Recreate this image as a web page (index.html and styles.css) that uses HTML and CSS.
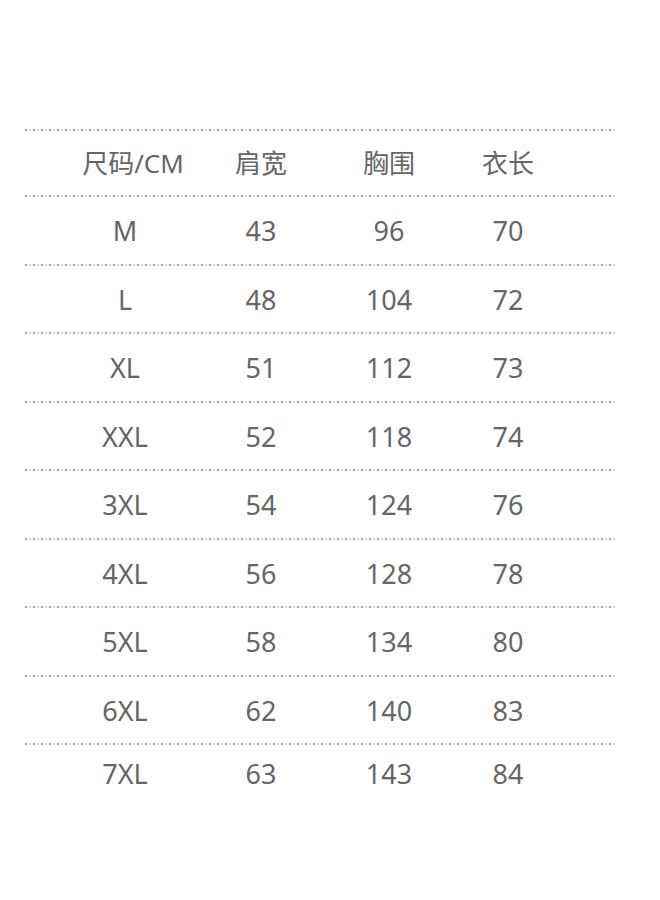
FILE: index.html
```html
<!DOCTYPE html>
<html lang="zh-CN">
<head>
<meta charset="utf-8">
<title>尺码表</title>
<link rel="stylesheet" href="styles.css">
</head>
<body>
<main class="sheet">
  <div class="chart">
    <div class="row head">
      <span class="cell first">尺码/CM</span>
      <span class="cell">肩宽</span>
      <span class="cell">胸围</span>
      <span class="cell">衣长</span>
    </div>
    <div class="row"><span class="cell">M</span><span class="cell">43</span><span class="cell">96</span><span class="cell">70</span></div>
    <div class="row"><span class="cell">L</span><span class="cell">48</span><span class="cell">104</span><span class="cell">72</span></div>
    <div class="row"><span class="cell">XL</span><span class="cell">51</span><span class="cell">112</span><span class="cell">73</span></div>
    <div class="row"><span class="cell">XXL</span><span class="cell">52</span><span class="cell">118</span><span class="cell">74</span></div>
    <div class="row"><span class="cell">3XL</span><span class="cell">54</span><span class="cell">124</span><span class="cell">76</span></div>
    <div class="row"><span class="cell">4XL</span><span class="cell">56</span><span class="cell">128</span><span class="cell">78</span></div>
    <div class="row"><span class="cell">5XL</span><span class="cell">58</span><span class="cell">134</span><span class="cell">80</span></div>
    <div class="row"><span class="cell">6XL</span><span class="cell">62</span><span class="cell">140</span><span class="cell">83</span></div>
    <div class="row last"><span class="cell">7XL</span><span class="cell">63</span><span class="cell">143</span><span class="cell">84</span></div>
  </div>
</main>
</body>
</html>
```
FILE: styles.css
```css
html, body {
  margin: 0;
  padding: 0;
  background: #ffffff;
}

.sheet {
  width: 660px;
  height: 900px;
  padding-top: 129px;
  box-sizing: border-box;
}

.chart {
  margin-left: 25px;
  width: 590px;
  display: flex;
  flex-direction: column;
  font-family: "Noto Sans", "Noto Sans CJK SC", sans-serif;
  color: #666666;
}

.row {
  display: grid;
  grid-template-columns: 150px 122px 134px 104px;
  padding-left: 25px;
  align-items: center;
  height: 68.5px;
  font-size: 27px;
  background-image: repeating-linear-gradient(to right,
      #9c9c9c 0, #9c9c9c 2px,
      transparent 2px, transparent 4px,
      #d6d6d6 4px, #d6d6d6 6px,
      transparent 6px, transparent 8px);
  background-size: 590px 2px;
  background-position: 0 0;
  background-repeat: no-repeat;
  box-sizing: border-box;
}

.row.head {
  height: 66px;
  font-size: 26px;
}

.row.last {
  height: 57px;
}

.cell {
  text-align: center;
  line-height: 1;
  padding-top: 3px;
}

.head .cell {
  padding-top: 2px;
}

.head .first {
  padding-left: 16px;
}
```
